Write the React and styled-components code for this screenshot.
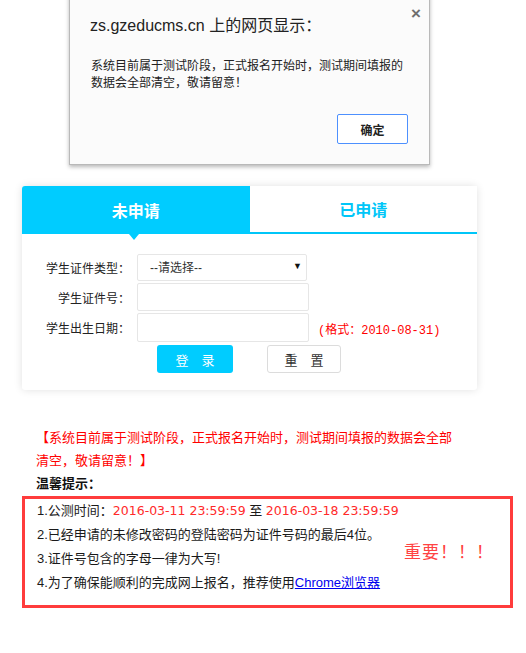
import React from 'react';
import styled, { createGlobalStyle } from 'styled-components';

const GlobalStyle = createGlobalStyle`
  html, body {
    margin: 0;
    padding: 0;
    background: #fff;
  }
  body {
    font-family: "Liberation Sans", "Noto Sans CJK SC", sans-serif;
    color: #222;
    overflow: hidden;
  }
`;

const Page = styled.div`
  position: relative;
  width: 526px;
  height: 653px;
`;

const Main = styled.div`
  width: 491px;
  padding: 186px 0 0 22px;
`;

// 浏览器 alert 弹窗，盖在页面上
const Alert = styled.div`
  position: absolute;
  left: 69px;
  top: -12px;
  width: 359px;
  height: 175px;
  background: #fbfbfb;
  border: 1px solid #b9b9b9;
  box-shadow: 0 2px 4px rgba(0, 0, 0, 0.28);
  z-index: 10;
`;

const AlertTitle = styled.div`
  position: absolute;
  left: 20px;
  top: 26px;
  font-size: 16px;
  line-height: 22px;
  color: #222;
`;

const AlertClose = styled.span`
  position: absolute;
  right: 8px;
  top: 17px;
  font-size: 17px;
  font-weight: bold;
  color: #6f6f6f;
  line-height: 16px;
`;

const AlertBody = styled.div`
  position: absolute;
  left: 21px;
  top: 69px;
  width: 320px;
  font-size: 12px;
  line-height: 17px;
  color: #222;
`;

const AlertButton = styled.button`
  position: absolute;
  left: 267px;
  top: 125px;
  width: 71px;
  height: 30px;
  background: #fff;
  border: 1px solid #4d90fe;
  border-radius: 2px;
  font-family: inherit;
  font-size: 12px;
  font-weight: bold;
  color: #222;
  padding: 0;
`;

const Card = styled.div`
  width: 455px;
  background: #fff;
  border-radius: 3px;
  box-shadow: 0 0 9px rgba(0, 0, 0, 0.12);
  padding-bottom: 17px;
`;

const Tabs = styled.div`
  display: flex;
  height: 48px;
`;

const Tab = styled.div`
  position: relative;
  flex: 1;
  display: flex;
  align-items: center;
  justify-content: center;
  font-size: 16px;
  font-weight: bold;
  color: ${p => (p.active ? '#fff' : '#00c6f8')};
  background: ${p => (p.active ? '#00ccff' : '#fff')};
  border-bottom: ${p => (p.active ? '1px solid #00ccff' : '2px solid #00c6f8')};
  height: ${p => (p.active ? '47px' : '46px')};
  border-top-left-radius: ${p => (p.active ? '3px' : '0')};

  &::after {
    content: '';
    display: ${p => (p.active ? 'block' : 'none')};
    position: absolute;
    left: 107px;
    bottom: -7px;
    border-left: 5px solid transparent;
    border-right: 5px solid transparent;
    border-top: 6px solid #00ccff;
  }
`;

const Form = styled.form`
  display: flex;
  flex-direction: column;
  gap: 2px;
  padding-top: 20px;
`;

const Row = styled.div`
  display: flex;
  align-items: center;
`;

const Label = styled.label`
  width: 108px;
  margin-right: 7px;
  text-align: right;
  font-size: 12px;
  color: #222;
`;

const SelectWrap = styled.span`
  position: relative;
  display: inline-block;

  &::after {
    content: '▼';
    position: absolute;
    right: 5px;
    top: 7px;
    font-size: 9px;
    color: #111;
    pointer-events: none;
  }
`;

const Select = styled.select`
  appearance: none;
  width: 170px;
  height: 27px;
  border: 1px solid #e6e6e6;
  border-radius: 2px;
  background: #fff;
  padding: 0 0 0 12px;
  font-family: inherit;
  font-size: 12px;
  color: #333;
  outline: none;
`;

const Input = styled.input`
  box-sizing: border-box;
  width: 172px;
  height: ${p => (p.tall ? '29px' : '28px')};
  border: 1px solid #e6e6e6;
  border-radius: 2px;
  outline: none;
`;

const Hint = styled.span`
  margin: 2px 0 0 9px;
  font-family: "Liberation Mono", "Noto Sans CJK SC", monospace;
  font-size: 12px;
  color: #ff0000;
`;

const Buttons = styled.div`
  display: flex;
  gap: 34px;
  margin: 1px 0 0 135px;
`;

const Button = styled.button`
  width: ${p => (p.primary ? '76px' : '74px')};
  height: 28px;
  border-radius: 3px;
  border: ${p => (p.primary ? 'none' : '1px solid #dcdcdc')};
  background: ${p => (p.primary ? '#00ccff' : '#fff')};
  color: ${p => (p.primary ? '#fff' : '#333')};
  font-family: inherit;
  font-size: 13px;
  letter-spacing: 13px;
  text-indent: 13px;
  padding: 0;
`;

const Notice = styled.p`
  width: 420px;
  margin: 36px 0 0;
  padding-left: 14px;
  font-size: 13px;
  line-height: 23px;
  color: #ff0000;
`;

const TipTitle = styled.div`
  padding-left: 14px;
  font-size: 13px;
  font-weight: bold;
  line-height: 24px;
  color: #111;
`;

const TipBox = styled.ol`
  position: relative;
  list-style: none;
  margin: 0;
  padding: 0 12px 10px;
  border: 3px solid #ff3c3c;
  font-size: 13px;
  line-height: 24px;
  color: #1a1a1a;
`;

const Red = styled.span`
  font-family: "DejaVu Sans", "Noto Sans CJK SC", sans-serif;
  font-size: 12.5px;
  color: #ff2a2a;
`;

const Link = styled.a`
  color: #0000ee;
  text-decoration: underline;
`;

const Important = styled.span`
  position: absolute;
  left: 379px;
  top: 42px;
  font-size: 17px;
  color: #ff4242;
  letter-spacing: 1px;
`;

export default function App() {
  return (
    <Page>
      <GlobalStyle />
      <Alert>
        <AlertTitle>zs.gzeducms.cn 上的网页显示：</AlertTitle>
        <AlertClose>×</AlertClose>
        <AlertBody>系统目前属于测试阶段，正式报名开始时，测试期间填报的数据会全部清空，敬请留意！</AlertBody>
        <AlertButton>确定</AlertButton>
      </Alert>

      <Main>
        <Card>
          <Tabs>
            <Tab active>未申请</Tab>
            <Tab>已申请</Tab>
          </Tabs>
          <Form onSubmit={e => e.preventDefault()}>
            <Row>
              <Label>学生证件类型：</Label>
              <SelectWrap>
                <Select defaultValue="">
                  <option value="">--请选择--</option>
                </Select>
              </SelectWrap>
            </Row>
            <Row>
              <Label>学生证件号：</Label>
              <Input />
            </Row>
            <Row>
              <Label>学生出生日期：</Label>
              <Input tall />
              <Hint>(格式：2010-08-31)</Hint>
            </Row>
            <Buttons>
              <Button primary type="submit">登录</Button>
              <Button type="reset">重置</Button>
            </Buttons>
          </Form>
        </Card>

        <Notice>【系统目前属于测试阶段，正式报名开始时，测试期间填报的数据会全部清空，敬请留意！】</Notice>
        <TipTitle>温馨提示：</TipTitle>
        <TipBox>
          <li>1.公测时间：<Red>2016-03-11 23:59:59</Red> 至 <Red>2016-03-18 23:59:59</Red></li>
          <li>2.已经申请的未修改密码的登陆密码为证件号码的最后4位。</li>
          <li>3.证件号包含的字母一律为大写!</li>
          <li>4.为了确保能顺利的完成网上报名，推荐使用<Link href="#">Chrome浏览器</Link></li>
          <Important>重要！！！</Important>
        </TipBox>
      </Main>
    </Page>
  );
}
